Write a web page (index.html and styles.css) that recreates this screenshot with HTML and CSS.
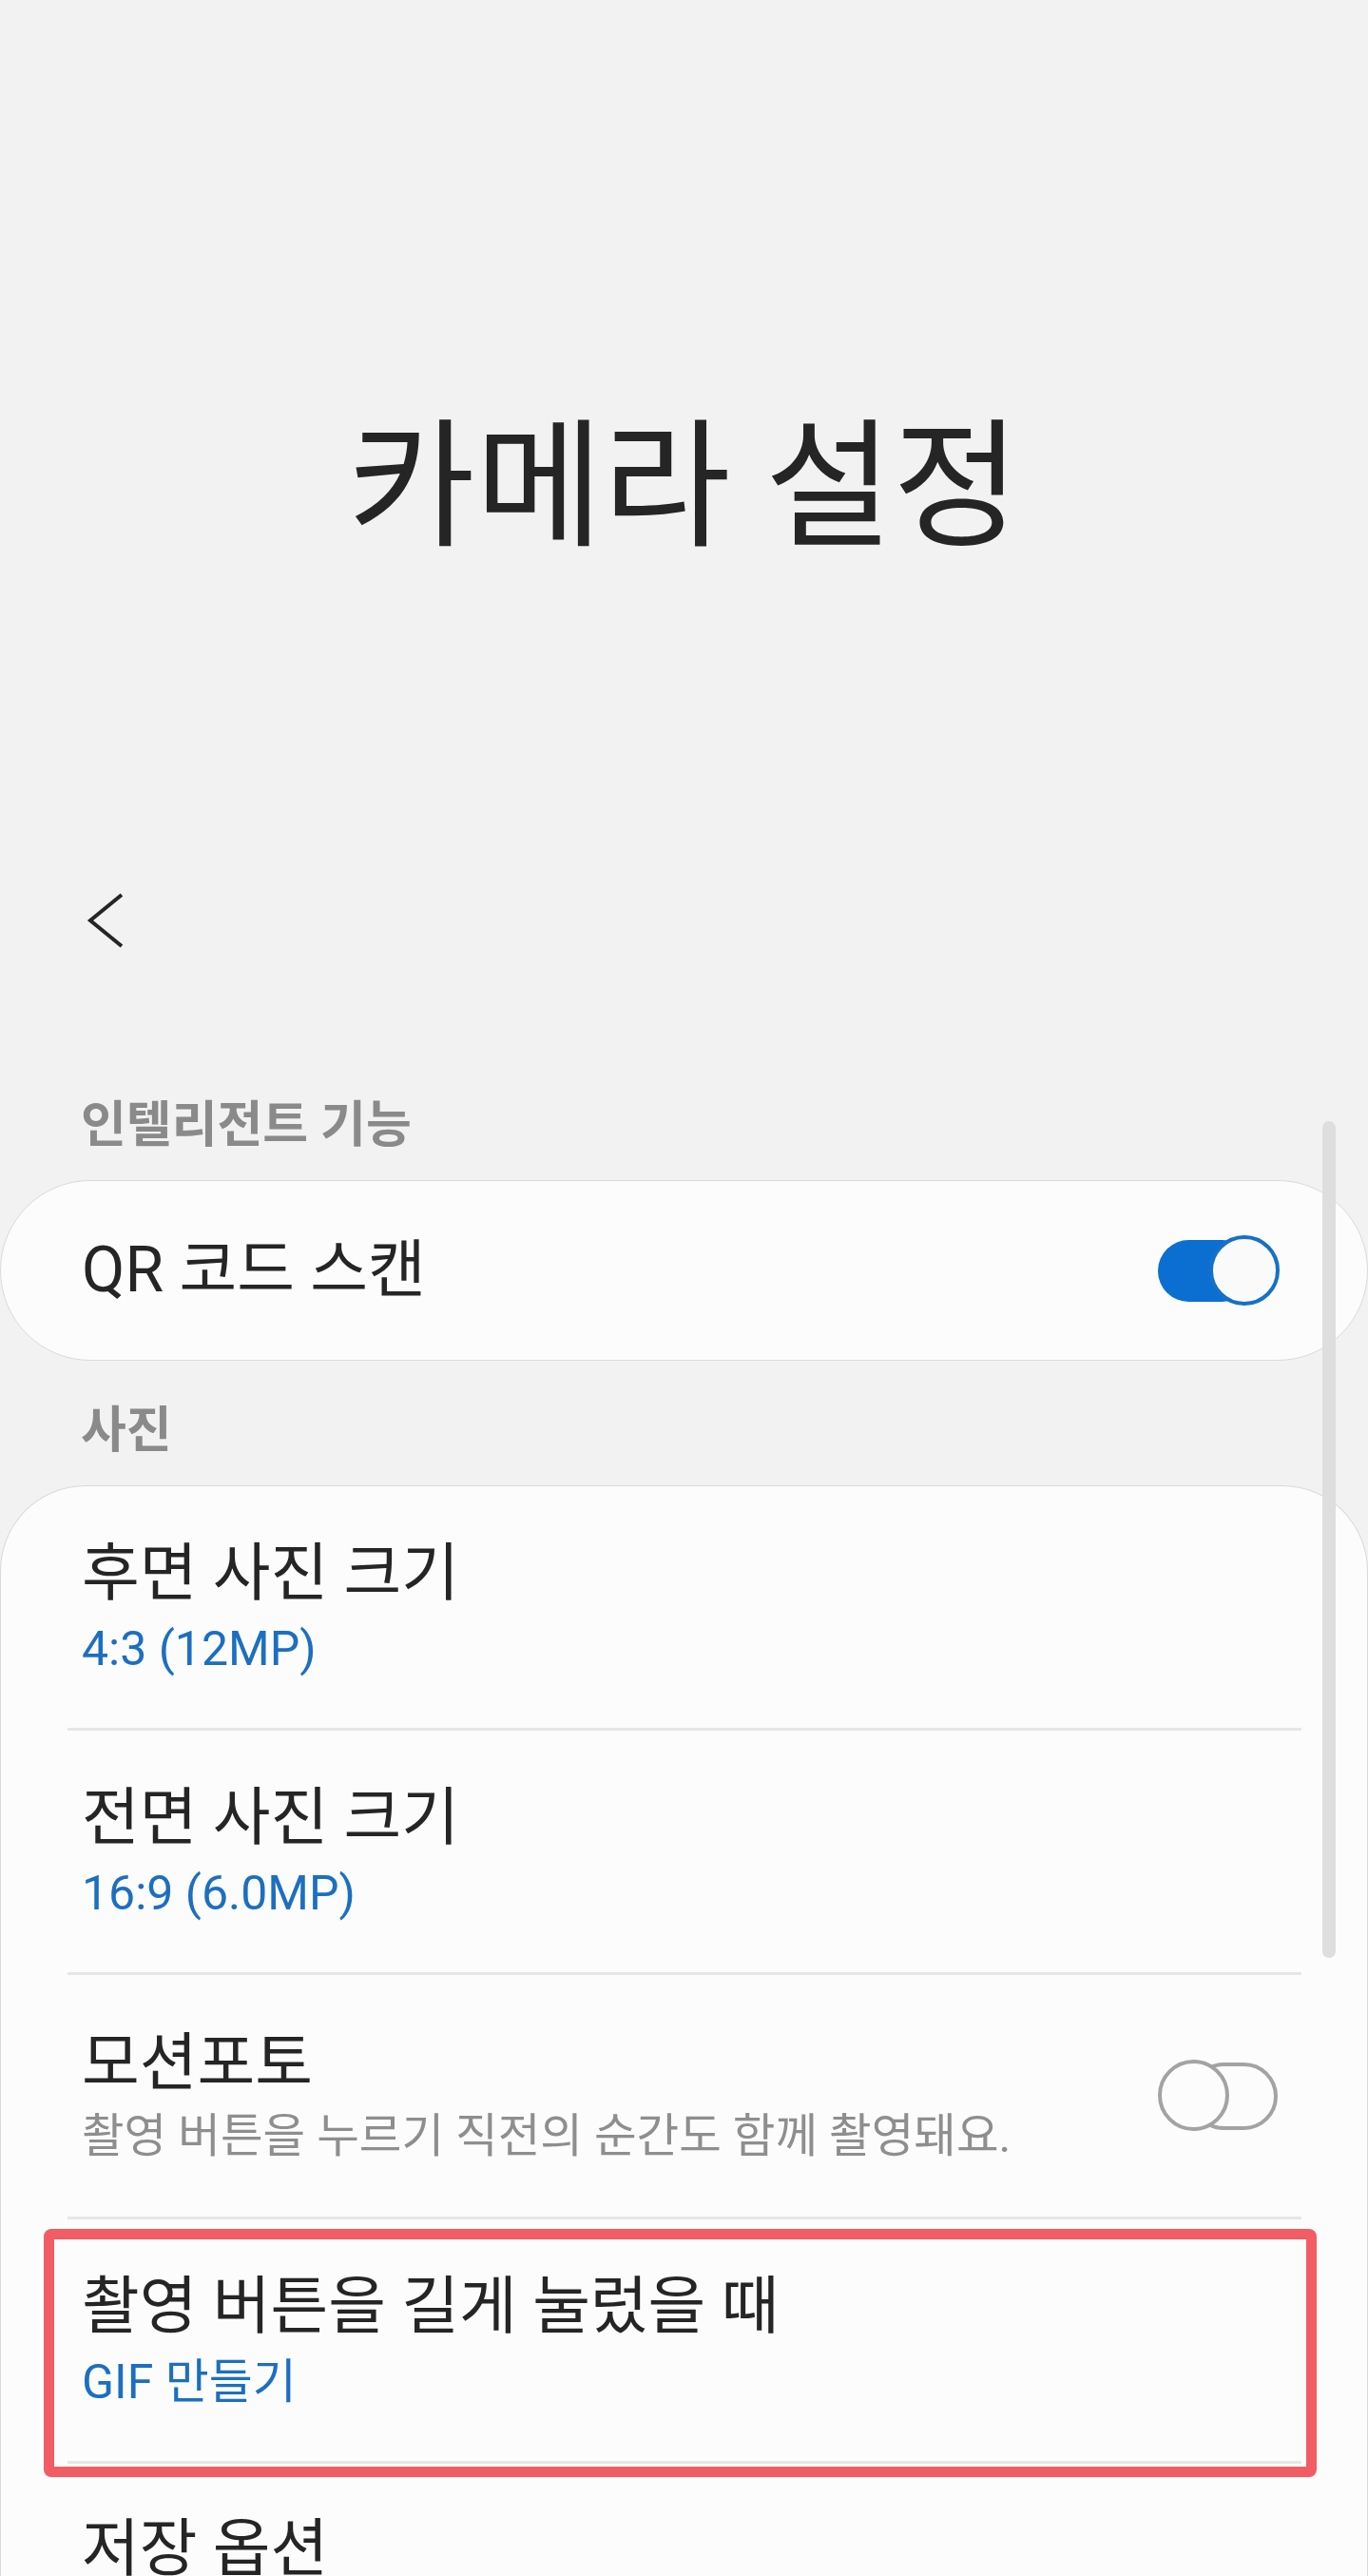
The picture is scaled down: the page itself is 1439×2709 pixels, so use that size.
FILE: index.html
```html
<!DOCTYPE html>
<html lang="ko">
<head>
    <meta charset="UTF-8">
    <meta name="viewport" content="width=device-width, initial-scale=1.0">
    <title>카메라 설정</title>
    <link rel="stylesheet" href="styles.css">
</head>
<body>

    <div class="screen">
        <header class="hero">
            <h1 class="hero-title">카메라 설정</h1>
        </header>

        <div class="toolbar">
            <button class="back" aria-label="뒤로">
                <svg width="40" height="60" viewBox="0 0 40 60">
                    <path d="M37 3 L4 30 L37 57" fill="none" stroke="#252525" stroke-width="4"/>
                </svg>
            </button>
        </div>

        <main class="list">
            <h2 class="section-label">인텔리전트 기능</h2>
            <section class="card card-single">
                <div class="row row-single">
                    <span class="row-title">QR 코드 스캔</span>
                    <span class="switch is-on">
                        <span class="switch-track"></span>
                        <span class="switch-thumb"></span>
                    </span>
                </div>
            </section>

            <h2 class="section-label">사진</h2>
            <section class="card card-group">
                <div class="row">
                    <div class="row-text">
                        <span class="row-title">후면 사진 크기</span>
                        <span class="row-sub">4:3 (12MP)</span>
                    </div>
                </div>
                <div class="divider"></div>

                <div class="row">
                    <div class="row-text">
                        <span class="row-title">전면 사진 크기</span>
                        <span class="row-sub">16:9 (6.0MP)</span>
                    </div>
                </div>
                <div class="divider"></div>

                <div class="row">
                    <div class="row-text">
                        <span class="row-title">모션포토</span>
                        <span class="row-desc">촬영 버튼을 누르기 직전의 순간도 함께 촬영돼요.</span>
                    </div>
                    <span class="switch is-off">
                        <span class="switch-track"></span>
                        <span class="switch-thumb"></span>
                    </span>
                </div>
                <div class="divider"></div>

                <div class="row row-highlight">
                    <div class="row-text">
                        <span class="row-title">촬영 버튼을 길게 눌렀을 때</span>
                        <span class="row-sub">GIF 만들기</span>
                    </div>
                    <span class="highlight"></span>
                </div>
                <div class="divider"></div>

                <div class="row row-top">
                    <div class="row-text">
                        <span class="row-title">저장 옵션</span>
                    </div>
                </div>
            </section>
        </main>

        <div class="scrollbar"></div>
    </div>

</body>
</html>
```

FILE: styles.css
```css
body {
    margin: 0;
    background-color: #f2f2f2;
    font-family: Roboto, "Noto Sans CJK KR", sans-serif;
    color: #252525;
}
.screen {
    position: relative;
    width: 1439px;
    height: 2709px;
    overflow: hidden;
}
.hero {
    padding-top: 433px;
    text-align: center;
}
.hero-title {
    margin: 0;
    font-size: 146px;
    font-weight: 400;
    line-height: 160px;
}
.toolbar {
    margin-top: 308px;
    height: 134px;
    display: flex;
    align-items: center;
    padding-left: 91px;
}
.back {
    border: none;
    background: none;
    padding: 0;
    width: 40px;
    height: 60px;
    cursor: pointer;
}
.back svg {
    display: block;
}
.list {
    padding-top: 119px;
}
.section-label {
    margin: 0 0 27px;
    padding-left: 85px;
    font-size: 52px;
    font-weight: 700;
    line-height: 60px;
    color: #8a8a8a;
}
.card + .section-label {
    margin-top: 44px;
}
.card {
    background: #fcfcfc;
    border: 1px solid #dadada;
}
.card-single {
    border-radius: 95px;
}
.card-group {
    border-bottom: none;
    border-radius: 90px 90px 0 0;
}
.row {
    display: flex;
    align-items: center;
    justify-content: space-between;
    height: 254px;
    padding: 0 92px 0 85px;
    box-sizing: border-box;
}
.row-single {
    height: 188px;
}
.row-top {
    align-items: flex-start;
    padding-top: 52px;
}
.row-text {
    display: flex;
    flex-direction: column;
}
.row-title {
    font-size: 66px;
    line-height: 76px;
}
.row-sub {
    margin-top: 11px;
    font-size: 50px;
    line-height: 60px;
    color: #1c6fc0;
}
.row-desc {
    margin-top: 9px;
    font-size: 48.5px;
    line-height: 60px;
    color: #8e8e8e;
}
.divider {
    height: 3px;
    background: #e6e6e6;
    margin: 0 69px 0 70px;
}

/* switches */
.switch {
    position: relative;
    flex: none;
    width: 128px;
    height: 76px;
}
.switch-track,
.switch-thumb {
    position: absolute;
    box-sizing: border-box;
}
.is-on .switch-track {
    left: 0;
    top: 6px;
    width: 100px;
    height: 65px;
    border-radius: 33px;
    background: #0b6fd1;
}
.is-on .switch-thumb {
    right: 0;
    top: 1px;
    width: 74px;
    height: 74px;
    border-radius: 50%;
    background: #fafafa;
    border: 4px solid #1670c8;
}
.is-off .switch-track {
    left: 34px;
    right: 2px;
    top: 3px;
    height: 71px;
    border-radius: 36px;
    background: #fcfcfc;
    border: 4px solid #a3a3a3;
}
.is-off .switch-thumb {
    left: 0;
    top: 0;
    width: 75px;
    height: 75px;
    border-radius: 50%;
    background: #fcfcfc;
    border: 4px solid #a3a3a3;
}

/* annotation box over the long-press row */
.row-highlight {
    position: relative;
}
.highlight {
    position: absolute;
    left: 45px;
    right: 53px;
    top: 10px;
    bottom: -17px;
    border: 11px solid #f25c64;
    border-radius: 8px;
    pointer-events: none;
}
.scrollbar {
    position: absolute;
    left: 1391px;
    top: 1179px;
    width: 14px;
    height: 880px;
    border-radius: 7px;
    background: #dedede;
}
```
